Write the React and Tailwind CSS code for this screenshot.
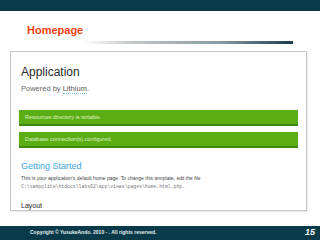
export default function App() {
  const sans = { fontFamily: '"Liberation Sans", Arial, sans-serif' };
  return (
    <div className="w-[320px] h-[240px] bg-white flex flex-col overflow-hidden" style={sans}>
      <div className="h-[11px] bg-[#083a49] shrink-0" />
      <div className="h-[30px] shrink-0 pt-[13px] pl-[27px]">
        <div className="text-[11px] leading-[13px] font-bold text-[#f0400e]">Homepage</div>
      </div>
      <div className="h-[3px] w-[293px] shrink-0" style={{ backgroundImage: 'linear-gradient(to right, #ffffff 0%, #ffffff 28%, #c4c8ca 45%, #8a9aa2 75%, #1a3d4c 100%)' }} />
      <div className="h-[7px] shrink-0" />
      <div className="ml-[10px] w-[297px] h-[160px] shrink-0 border border-[#c6c6c6] shadow-[1px_1px_1px_rgba(0,0,0,0.08)] overflow-hidden flex flex-col">
        <div className="pl-[10px] mt-[13px] text-[12px] leading-[14px] text-[#2a2a2a]">Application</div>
        <div className="pl-[10px] mt-[5px] text-[7.5px] leading-[9px] text-[#666]">
          Powered by <span className="text-[#555] border-b border-dotted border-[#7ab8e0]">Lithium</span>.
        </div>
        <div className="mx-[8px] mt-[17px] h-[16px] bg-[#5bad14] border-b-2 border-[#3f8a0d] flex items-center pl-[6px] text-[5.5px] text-[#dff3c8]">
          Resources directory is writable.
        </div>
        <div className="mx-[8px] mt-[6px] h-[16px] bg-[#5bad14] border-b-2 border-[#3f8a0d] flex items-center pl-[6px] text-[5.5px] text-[#dff3c8]">
          Database connection(s) configured.
        </div>
        <div className="pl-[10px] mt-[13px] text-[9px] leading-[11px] text-[#3ca6dc]">Getting Started</div>
        <div className="pl-[10px] mt-[3px] text-[5px] leading-[7px] text-[#444]">
          This is your application's default home page. To change this template, edit the file
        </div>
        <div className="pl-[10px] mt-[1px] text-[4.8px] leading-[7px] text-[#777]" style={{ fontFamily: '"Liberation Mono", monospace' }}>
          C:\xampplite\htdocs\labs02\app\views\pages\home.html.php.
        </div>
        <div className="pl-[10px] mt-[11px] text-[7px] leading-[9px] text-[#222]">Layout</div>
      </div>
      <div className="h-[15px] shrink-0" />
      <div className="h-[14px] shrink-0 bg-[#083a49] flex items-center justify-between pl-[30px] pr-[5px]">
        <span className="text-[5px] font-bold text-[#e6eef0]">Copyright © YusukeAndo. 2010 - . All rights reserved.</span>
        <span className="text-[9px] font-bold italic text-white">15</span>
      </div>
    </div>
  );
}
